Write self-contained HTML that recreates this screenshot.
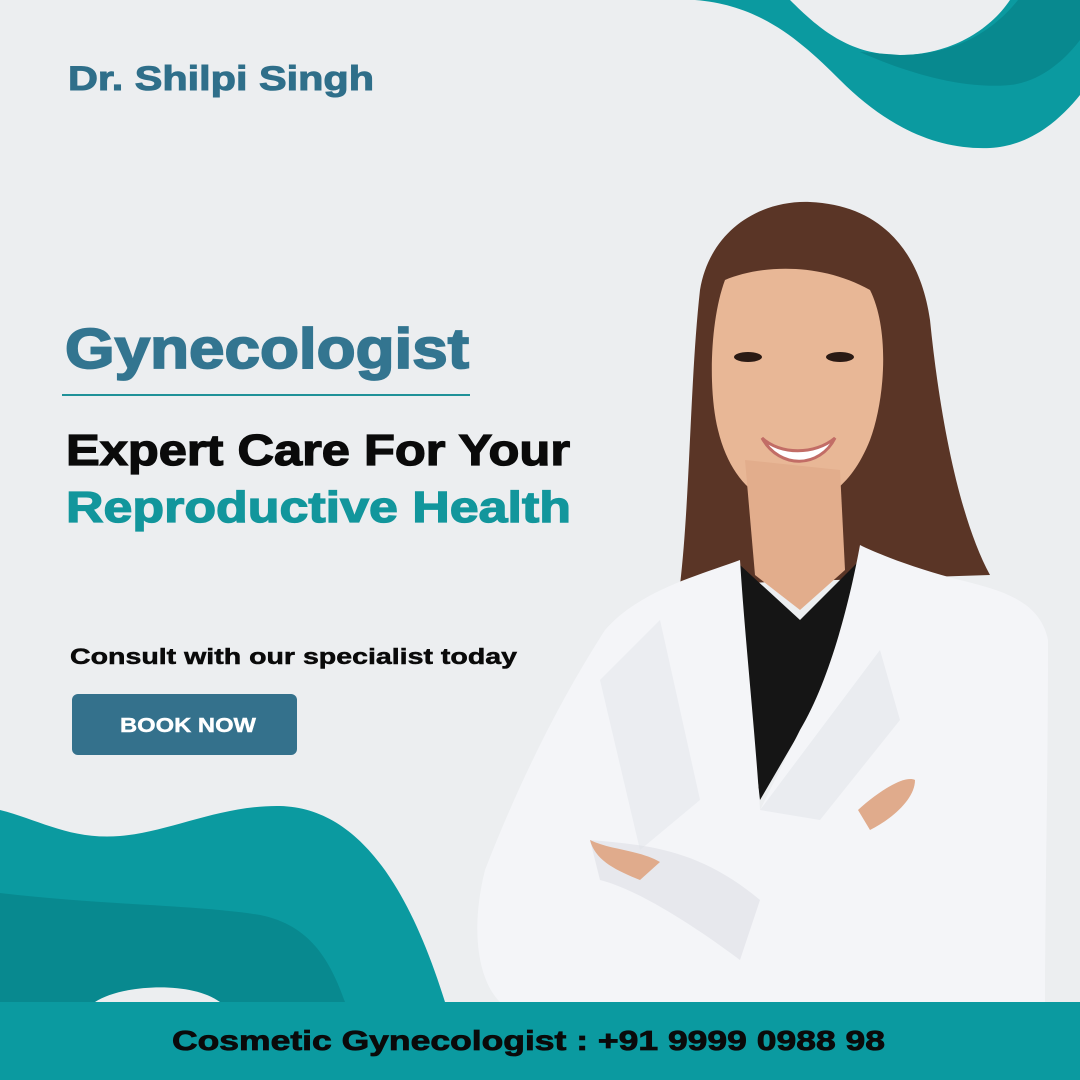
<!DOCTYPE html>
<html><head><meta charset="utf-8"><style>
html,body{margin:0;padding:0;width:1080px;height:1080px;overflow:hidden;background:#eceef0}
svg{display:block}
text{font-family:"Liberation Sans",sans-serif;font-weight:bold}
</style></head><body>
<svg width="1080" height="1080" viewBox="0 0 1080 1080" xmlns="http://www.w3.org/2000/svg">
<rect width="1080" height="1080" fill="#eceef0"/>
<!-- top right wave -->
<path d="M695 0 C760 5 800 40 840 80 C890 130 940 150 990 148 C1030 146 1060 120 1080 95 L1080 0 Z" fill="#0b9aa0"/>
<path d="M790 0 C820 30 850 55 900 55 C950 55 990 30 1010 0 Z" fill="#eceef0"/>
<path d="M860 52 C900 70 960 90 1010 85 C1040 82 1065 60 1080 40 L1080 0 L1018 0 C990 35 950 55 900 55 Z" fill="#08898f"/>
<!-- bottom left wave -->
<path d="M0 810 C40 820 70 840 120 836 C170 832 220 805 280 806 C360 808 410 890 445 1002 L0 1002 Z" fill="#0b9aa0"/>
<path d="M0 893 C100 905 200 905 260 915 C310 925 330 960 345 1002 L0 1002 Z" fill="#08898f"/>
<path d="M95 1002 C120 985 190 980 220 1002 Z" fill="#eceef0"/>
<!-- woman -->
<path d="M700 290 C710 230 760 200 810 202 C880 205 920 250 930 320 C940 420 960 520 990 575 L680 585 C690 500 690 380 700 290 Z" fill="#5a3526"/>
<path d="M725 280 C760 265 820 262 870 290 C890 330 885 400 870 440 C850 490 820 505 790 505 C760 505 730 480 718 430 C708 390 710 320 725 280 Z" fill="#e8b796"/>
<path d="M745 460 L840 470 L845 570 L800 610 L755 575 Z" fill="#e2ad8c"/>
<path d="M740 565 L800 620 L860 560 L830 680 L760 800 L748 700 Z" fill="#151515"/>
<path d="M740 560 C700 575 640 590 605 630 C560 700 520 780 485 870 C470 930 478 980 500 1002 L1045 1002 C1045 900 1048 780 1048 640 C1040 600 1000 590 960 580 C920 570 880 555 860 545 C850 600 830 680 800 730 L760 810 C755 730 745 640 740 560 Z" fill="#f4f5f8"/>
<path d="M600 680 L660 620 L700 800 L640 850 Z" fill="#e4e7ec" opacity=".6"/>
<path d="M760 810 L880 650 L900 720 L820 820 Z" fill="#e3e6eb" opacity=".6"/>
<path d="M590 840 C650 845 700 850 760 900 L740 960 C700 930 640 890 600 880 Z" fill="#dde0e6" opacity=".6"/>
<path d="M858 810 C880 790 905 775 915 780 C915 800 890 820 870 830 Z" fill="#e0ab8c"/>
<path d="M590 840 C610 850 640 850 660 862 L640 880 C615 870 595 860 590 840 Z" fill="#e0ab8c"/>
<ellipse cx="748" cy="357" rx="14" ry="5" fill="#2a1a14"/>
<ellipse cx="840" cy="357" rx="14" ry="5" fill="#2a1a14"/>
<path d="M762 438 C780 455 815 455 835 438 C820 468 780 470 762 438 Z" fill="#fff" stroke="#c26d66" stroke-width="3"/>
<!-- text -->
<text x="68" y="90" font-size="34" fill="#2f6f8a" stroke="#2f6f8a" stroke-width="1" textLength="306" lengthAdjust="spacingAndGlyphs">Dr. Shilpi Singh</text>
<text x="65" y="368" font-size="57" fill="#337590" stroke="#337590" stroke-width="1.8" textLength="404" lengthAdjust="spacingAndGlyphs">Gynecologist</text>
<rect x="62" y="394" width="408" height="2" fill="#1f9198"/>
<text x="66" y="465" font-size="44" fill="#0a0a0a" stroke="#0a0a0a" stroke-width="1.3" textLength="504" lengthAdjust="spacingAndGlyphs">Expert Care For Your</text>
<text x="66" y="522" font-size="44" fill="#12969c" stroke="#12969c" stroke-width="1.3" textLength="505" lengthAdjust="spacingAndGlyphs">Reproductive Health</text>
<text x="70" y="664" font-size="22" fill="#0a0a0a" stroke="#0a0a0a" stroke-width=".5" textLength="447" lengthAdjust="spacingAndGlyphs">Consult with our specialist today</text>
<rect x="72" y="694" width="225" height="61" rx="6" fill="#34718c"/>
<text x="120" y="732" font-size="20" fill="#fff" stroke="#fff" stroke-width=".4" textLength="136" lengthAdjust="spacingAndGlyphs">BOOK NOW</text>
<!-- footer -->
<rect x="0" y="1002" width="1080" height="78" fill="#0b9aa0"/>
<text x="172" y="1050" font-size="28" fill="#0a0a0a" stroke="#0a0a0a" stroke-width=".8" textLength="713" lengthAdjust="spacingAndGlyphs">Cosmetic Gynecologist :  +91 9999 0988 98</text>
</svg>
</body></html>
